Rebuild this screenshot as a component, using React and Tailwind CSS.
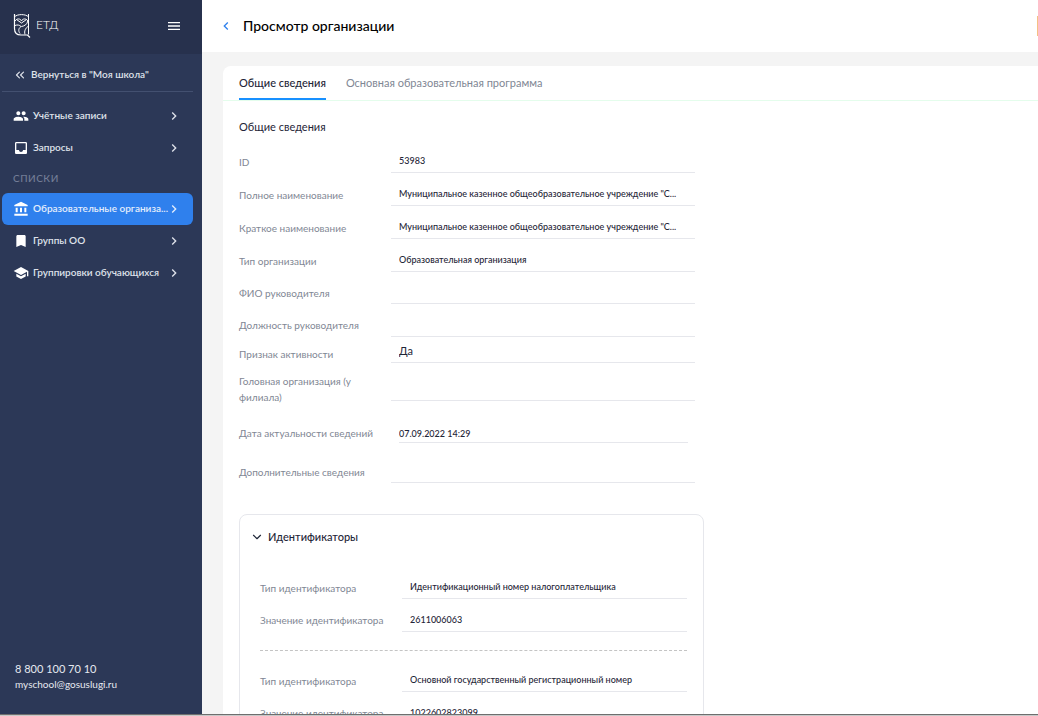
import React, { useState } from "react";
import {
  MdPeople,
  MdInbox,
  MdAccountBalance,
  MdBookmark,
  MdSchool,
  MdChevronRight,
  MdChevronLeft,
  MdMenu,
} from "react-icons/md";
import { ChevronsLeft, ChevronDown } from "lucide-react";

const accounts = [
  { name: "Учётные записи", icon: MdPeople },
  { name: "Запросы", icon: MdInbox },
];

const lists = [
  { name: "Образовательные организа...", icon: MdAccountBalance, active: true },
  { name: "Группы ОО", icon: MdBookmark },
  { name: "Группировки обучающихся", icon: MdSchool },
];

const school = 'Муниципальное казенное общеобразовательное учреждение "С...';

const fields = [
  { id: "id", label: "ID", value: "53983", row: "h-[33px]" },
  { id: "fullName", label: "Полное наименование", value: school, row: "h-[33px]" },
  { id: "shortName", label: "Краткое наименование", value: school, row: "h-[33px]" },
  { id: "type", label: "Тип организации", value: "Образовательная организация", row: "h-[33px]" },
  { id: "head", label: "ФИО руководителя", value: "", row: "h-[31px]" },
  { id: "position", label: "Должность руководителя", value: "", row: "h-[34px]" },
  { id: "active", label: "Признак активности", value: "Да", row: "h-6", input: "pl-2 h-5 -mt-1 pb-1 text-[11px]" },
  { id: "parent", label: "Головная организация (у филиала)", value: "", row: "h-[46px]" },
  { id: "date", label: "Дата актуальности сведений", value: "07.09.2022 14:29", row: "h-[42px]", input: "ml-2 mr-[7px] h-[18px] text-[9px] font-medium" },
  { id: "extra", label: "Дополнительные сведения", value: "", row: "h-[35px]" },
];

const identifiers = [
  { type: "Идентификационный номер налогоплательщика", value: "2611006063" },
  { type: "Основной государственный регистрационный номер", value: "1022602823099" },
];

const Logo = () => (
  <svg viewBox="0 0 18 26" className="w-[18px] h-[26px]" fill="none" stroke="#fff" strokeWidth="1">
    <path d="M1.500 1v14.500c0 4 2.500 6.500 6.500 6.500h6.500l2.500 2.500" strokeWidth="1.200" />
    <path d="M15.500 1v20.500" />
    <path d="M1.500 4C4 .8 13 .8 15.500 4" />
    <path d="M2 8c2-3 5.500-2.500 6.500 0 1-2.500 4.500-3 6.500 0" />
    <path d="M3.500 6.500l5 3.500 5-3.500" />
    <path d="M14.800 8c-.5 3.500-3.500 5-6.300 5.500C5.500 14.500 5 18 7 20.500M2 12.500c2.500-1 4.500-.5 6 1" />
    <path d="M15 13.500c-2.500 1.500-4 4.500-3 8" />
  </svg>
);

const NavItem = ({ item }) => {
  const Icon = item.icon;
  return (
    <a
      href="#"
      className={`flex items-center h-8 pl-[11px] pr-[11px] rounded-md text-[10px] font-semibold ${
        item.active ? "bg-[#2f80ed] text-[#e3edfc]" : "text-[#dfe2ea]"
      }`}
    >
      <Icon className="size-4 mr-1 shrink-0 text-white" />
      <span className="flex-1 whitespace-nowrap pb-0.5">{item.name}</span>
      <MdChevronRight className="size-4 -ml-1 shrink-0" />
    </a>
  );
};

const Field = ({ id, label, value, row = "h-[33px]", input = "pl-2 h-[21px] pb-[3px] text-[9px] font-medium", labelWidth = "w-[152px]" }) => (
  <div className={`flex items-center ${row}`}>
    <label htmlFor={id} className={`${labelWidth} shrink-0 pr-3 pb-0.5 text-[10px] leading-4 text-[#7f8794]`}>
      {label}
    </label>
    <input
      id={id}
      readOnly
      defaultValue={value}
      className={`flex-1 min-w-0 border-b border-[#e6e7ec] text-[#1f2638] text-ellipsis outline-none ${input}`}
    />
  </div>
);

const App = () => {
  const [tab, setTab] = useState(0);
  const [open, setOpen] = useState(true);

  return (
    <div className="h-screen flex flex-col overflow-hidden font-['Lato',sans-serif] bg-[#f4f4f4]">
      <div className="flex flex-1 min-h-0">
        <aside className="w-[202px] shrink-0 flex flex-col bg-[#2c3857]">
          <div className="h-[54px] shrink-0 flex items-center pl-[13px] pr-5 pb-0.5 bg-[#27314d] text-white">
            <Logo />
            <span className="ml-[5px] flex-1 pb-0.5 text-xs font-light">ЕТД</span>
            <button aria-label="Меню">
              <MdMenu className="size-4" />
            </button>
          </div>
          <nav className="flex-1 pl-0.5 pr-[9px]">
            <a
              href="#"
              className="flex items-center gap-1 h-[38px] pl-[11px] pt-1 border-b border-[#435070] text-[10px] font-semibold text-[#dfe2ea]"
            >
              <ChevronsLeft className="size-3.5" />
              Вернуться в "Моя школа"
            </a>
            <div className="pt-2">
              {accounts.map((item) => (
                <NavItem key={item.name} item={item} />
              ))}
            </div>
            <h2 className="h-[29px] pl-[11px] flex items-center text-[10px] font-medium tracking-wider text-[#737d96]">
              СПИСКИ
            </h2>
            {lists.map((item) => (
              <NavItem key={item.name} item={item} />
            ))}
          </nav>
          <div className="pl-[15px] pb-[22px] text-[#e6e9f0]">
            <div className="text-[11px] leading-4">8 800 100 70 10</div>
            <a href="mailto:myschool@gosuslugi.ru" className="block text-[10px] leading-[15px]">
              myschool@gosuslugi.ru
            </a>
          </div>
        </aside>

        <main className="flex-1 min-w-0 flex flex-col overflow-hidden">
          <header className="h-[52px] shrink-0 flex items-center pl-4 bg-white overflow-hidden">
            <button aria-label="Назад" className="text-[#2f80ed]">
              <MdChevronLeft className="size-4" />
            </button>
            <h1 className="ml-[9px] pb-0.5 text-[14px] font-medium text-black">Просмотр организации</h1>
            <button aria-label="Действия" className="ml-auto -mr-[31px] w-8 h-5 border border-[#f5c184]" />
          </header>

          <section className="flex-1 min-h-0 mt-3.5 ml-[21px] bg-white rounded-tl-lg overflow-hidden">
            <div className="flex gap-5 h-[35px] pl-4 border-b border-[#e4fdec] text-[11px]">
              {["Общие сведения", "Основная образовательная программа"].map((name, index) => (
                <button
                  key={name}
                  onClick={() => setTab(index)}
                  className={`h-[34px] pt-0.5 border-b-2 ${
                    tab === index ? "border-[#1890ff] font-medium text-[#1f2638]" : "border-transparent text-[#7f8794]"
                  }`}
                >
                  {name}
                </button>
              ))}
            </div>

            <div className="pl-4">
              <h2 className="pt-[18px] pb-[11px] text-[11px] leading-4 text-[#1f2638]">Общие сведения</h2>
              <div className="max-w-[456px]">
                {fields.map((field) => (
                  <Field key={field.id} {...field} />
                ))}
              </div>

              <div className="mt-6 max-w-[465px] border border-[#e6e7ec] rounded-lg">
                <button
                  onClick={() => setOpen(!open)}
                  className="flex items-center gap-1 h-11 pl-2.5 text-[11px] font-medium text-[#1f2638]"
                >
                  <ChevronDown className="size-3.5" />
                  Идентификаторы
                </button>
                {open && (
                  <div className="pl-5 pr-4 pt-[13px]">
                    {identifiers.map((item, index) => (
                      <div key={item.value} className="pb-[13px] mb-3.5 border-b border-dashed border-[#c4c4c4]">
                        <Field id={`type${index}`} label="Тип идентификатора" value={item.type} labelWidth="w-[142px]" />
                        <Field id={`value${index}`} label="Значение идентификатора" value={item.value} labelWidth="w-[142px]" row="h-8" />
                      </div>
                    ))}
                  </div>
                )}
              </div>
            </div>
          </section>
        </main>
      </div>
      <div className="h-0.5 shrink-0 border-t border-[#6e6e6e] bg-[#c8c8c8]" />
    </div>
  );
};

export default App;
